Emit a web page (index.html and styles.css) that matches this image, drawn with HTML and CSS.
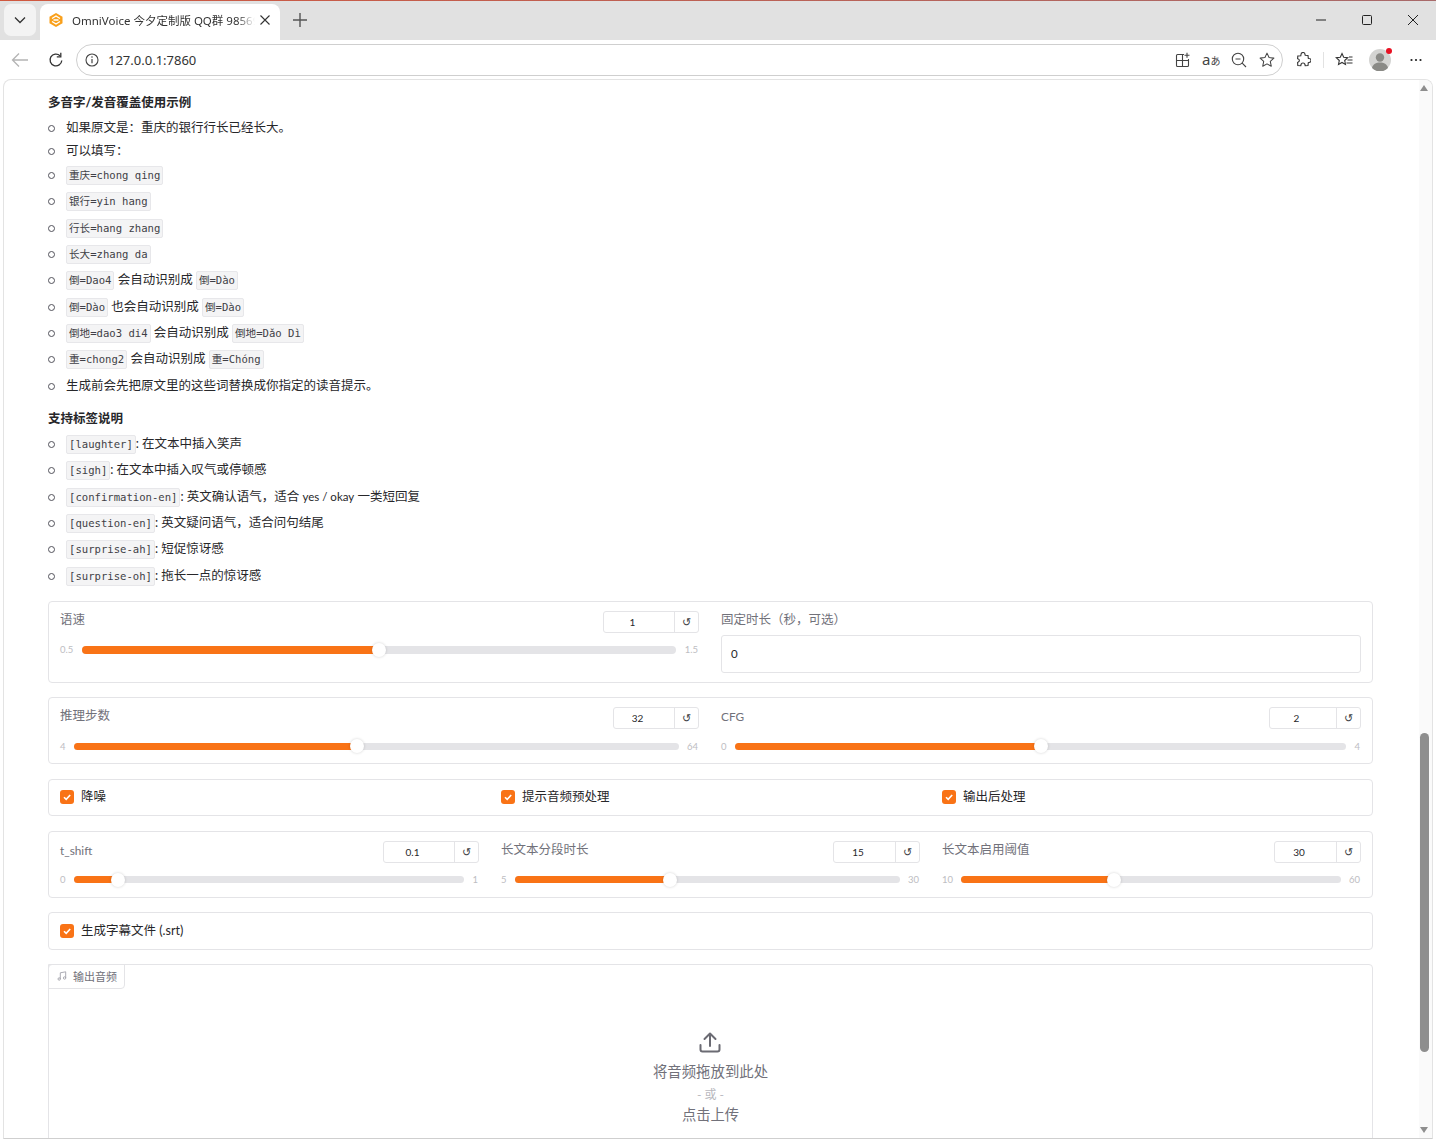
FILE: index.html
```html
<!DOCTYPE html>
<html lang="zh-CN">
<head>
<meta charset="utf-8">
<title>OmniVoice</title>
<link rel="stylesheet" href="styles.css">
</head>
<body>
<header class="tabstrip">
  <button class="tab-menu"><svg width="12" height="8" viewBox="0 0 12 8"><path d="M1 1.500l5 5 5-5" fill="none" stroke="#333" stroke-width="1.300"/></svg></button>
  <div class="tab">
    <svg class="favicon" width="16" height="16" viewBox="0 0 16 16"><path d="M8 1l6.500 3.700v6.600L8 15l-6.500-3.700V4.700z" fill="#f9a01b"/><path d="M4 6.500L8 4l4 2.500M4 9.500L8 12l4-2.500M5.500 8h5" stroke="#fff" stroke-width="1.400" fill="none"/></svg>
    <span class="tab-title">OmniVoice 今夕定制版 QQ群 985692</span>
    <svg width="10" height="10" viewBox="0 0 10 10"><path d="M.5.500l9 9M9.500.500l-9 9" stroke="#333" stroke-width="1.100"/></svg>
  </div>
  <svg class="newtab" width="14" height="14" viewBox="0 0 14 14"><path d="M7 0v14M0 7h14" stroke="#555" stroke-width="1.400"/></svg>
  <div class="winctl">
    <svg width="12" height="12" viewBox="0 0 12 12"><path d="M1 6h10" stroke="#222" stroke-width="1"/></svg>
    <svg width="12" height="12" viewBox="0 0 12 12"><rect x="1.500" y="1.500" width="9" height="9" rx="1" fill="none" stroke="#222"/></svg>
    <svg width="12" height="12" viewBox="0 0 12 12"><path d="M1 1l10 10M11 1L1 11" stroke="#222"/></svg>
  </div>
</header>

<nav class="toolbar">
  <svg class="nav-back" width="18" height="16" viewBox="0 0 18 16"><path d="M17 8H2M8 1.500L1.500 8 8 14.500" fill="none" stroke="#b4b4b4" stroke-width="1.300"/></svg>
  <svg class="nav-reload" width="16" height="16" viewBox="0 0 16 16"><path d="M13.800 8.500A5.900 5.900 0 1 1 12 3.700" fill="none" stroke="#333" stroke-width="1.300"/><path d="M12.800 .8v4h-4" fill="none" stroke="#333" stroke-width="1.300"/></svg>
  <div class="omnibox">
    <svg width="14" height="14" viewBox="0 0 14 14"><circle cx="7" cy="7" r="6" fill="none" stroke="#444" stroke-width="1.100"/><path d="M7 6v4.200" stroke="#444" stroke-width="1.200"/><circle cx="7" cy="4" r=".8" fill="#444"/></svg>
    <span class="url">127.0.0.1:7860</span>
    <div class="omni-icons">
      <svg width="16" height="16" viewBox="0 0 16 16"><path d="M9 2.500H2.500a1 1 0 0 0-1 1v10a1 1 0 0 0 1 1h10a1 1 0 0 0 1-1V7M1.500 8.500h12M7.500 2.500v12M12 .8v5M9.500 3.300h5" fill="none" stroke="#444" stroke-width="1.100"/></svg>
      <span class="translate">a<small>あ</small></span>
      <svg width="16" height="16" viewBox="0 0 16 16"><circle cx="7" cy="7" r="5.700" fill="none" stroke="#444" stroke-width="1.100"/><path d="M11.200 11.200L15 15M4.500 7h5" stroke="#444" stroke-width="1.100"/></svg>
      <svg width="16" height="16" viewBox="0 0 17 17"><path d="M8.500 1.200l2.200 4.700 5.100.6-3.800 3.500 1 5.100-4.500-2.500-4.500 2.500 1-5.100L1.200 6.500l5.100-.6z" fill="none" stroke="#444" stroke-width="1.100" stroke-linejoin="round"/></svg>
    </div>
  </div>
  <svg class="ext" width="16" height="16" viewBox="0 0 16 16"><path d="M6 2.500a2 2 0 0 1 4 0l.2.800 2.800.2.300 2.800.700.200a2 2 0 0 1 0 4l-.700.200-.300 2.800-2.800.2-.2-.700a2 2 0 0 0-4 0l-.2.700-3-.2-.200-3 .700-.400a1.600 1.600 0 0 0 0-3l-.700-.400.200-2.800 3-.2z" fill="none" stroke="#333" stroke-width="1.100"/></svg>
  <i class="tool-sep"></i>
  <svg class="favs" width="18" height="16" viewBox="0 0 18 16"><path d="M7 1.500l1.700 3.800 4 .4-3 2.800.8 4L7 10.500l-3.500 2 .8-4-3-2.800 4-.4zM12.500 8h5M11.500 11h6M14 5h3.500" fill="none" stroke="#333" stroke-width="1.100"/></svg>
  <div class="avatar"><svg width="22" height="22" viewBox="0 0 22 22"><circle cx="11" cy="11" r="11" fill="#d4d4d2"/><circle cx="11" cy="8.500" r="4.200" fill="#8a8a86"/><path d="M3 19c1-4 4-5.500 8-5.500s7 1.500 8 5.500a11 11 0 0 1-16 0z" fill="#8a8a86"/></svg><i class="avatar-dot"></i></div>
  <svg class="more" width="12" height="4" viewBox="0 0 12 4"><circle cx="1.500" cy="2" r="1.100" fill="#222"/><circle cx="6" cy="2" r="1.100" fill="#222"/><circle cx="10.500" cy="2" r="1.100" fill="#222"/></svg>
</nav>

<div class="viewport">
  <main class="page">
    <section class="prose">
      <p class="heading">多音字/发音覆盖使用示例</p>
      <ul>
        <li>如果原文是：重庆的银行行长已经长大。</li>
        <li>可以填写：</li>
        <li class="coderow"><code>重庆=chong qing</code></li>
        <li class="coderow"><code>银行=yin hang</code></li>
        <li class="coderow"><code>行长=hang zhang</code></li>
        <li class="coderow"><code>长大=zhang da</code></li>
        <li class="coderow"><code>倒=Dao4</code> 会自动识别成 <code>倒=Dào</code></li>
        <li class="coderow"><code>倒=Dào</code> 也会自动识别成 <code>倒=Dào</code></li>
        <li class="coderow"><code>倒地=dao3 di4</code> 会自动识别成 <code>倒地=Dǎo Dì</code></li>
        <li class="coderow"><code>重=chong2</code> 会自动识别成 <code>重=Chóng</code></li>
        <li>生成前会先把原文里的这些词替换成你指定的读音提示。</li>
      </ul>
      <p class="heading heading-second">支持标签说明</p>
      <ul>
        <li class="coderow"><code>[laughter]</code>: 在文本中插入笑声</li>
        <li class="coderow"><code>[sigh]</code>: 在文本中插入叹气或停顿感</li>
        <li class="coderow"><code>[confirmation-en]</code>: 英文确认语气，适合 <span class="latin">yes / okay</span> 一类短回复</li>
        <li class="coderow"><code>[question-en]</code>: 英文疑问语气，适合问句结尾</li>
        <li class="coderow"><code>[surprise-ah]</code>: 短促惊讶感</li>
        <li class="coderow"><code>[surprise-oh]</code>: 拖长一点的惊讶感</li>
      </ul>
    </section>

    <section class="panel cols-2 panel-tall">
      <div class="field">
        <div class="field-head"><label>语速</label><div class="num num-wide"><span class="num-val">1</span><span class="num-reset">↺</span></div></div>
        <div class="slider"><span class="lim">0.5</span><div class="track" style="--v:.5"><i class="fill"></i><i class="thumb"></i></div><span class="lim">1.5</span></div>
      </div>
      <div class="field">
        <label class="text-label">固定时长（秒，可选）</label>
        <div class="textbox">0</div>
      </div>
    </section>

    <section class="panel cols-2">
      <div class="field">
        <div class="field-head"><label>推理步数</label><div class="num"><span class="num-val">32</span><span class="num-reset">↺</span></div></div>
        <div class="slider"><span class="lim">4</span><div class="track thin" style="--v:.4667"><i class="fill"></i><i class="thumb"></i></div><span class="lim">64</span></div>
      </div>
      <div class="field">
        <div class="field-head"><label class="label-latin">CFG</label><div class="num num-mid"><span class="num-val">2</span><span class="num-reset">↺</span></div></div>
        <div class="slider"><span class="lim">0</span><div class="track thin" style="--v:.5"><i class="fill"></i><i class="thumb"></i></div><span class="lim">4</span></div>
      </div>
    </section>

    <section class="panel cols-3 panel-check">
      <div class="check"><i class="box"><svg width="10" height="10" viewBox="0 0 10 10"><path d="M2 5.200l2.200 2.200L8.200 3" fill="none" stroke="#fff" stroke-width="1.600"/></svg></i>降噪</div>
      <div class="check"><i class="box"><svg width="10" height="10" viewBox="0 0 10 10"><path d="M2 5.200l2.200 2.200L8.200 3" fill="none" stroke="#fff" stroke-width="1.600"/></svg></i>提示音频预处理</div>
      <div class="check"><i class="box"><svg width="10" height="10" viewBox="0 0 10 10"><path d="M2 5.200l2.200 2.200L8.200 3" fill="none" stroke="#fff" stroke-width="1.600"/></svg></i>输出后处理</div>
    </section>

    <section class="panel cols-3">
      <div class="field">
        <div class="field-head"><label class="label-latin">t_shift</label><div class="num num-wide"><span class="num-val">0.1</span><span class="num-reset">↺</span></div></div>
        <div class="slider"><span class="lim">0</span><div class="track thin" style="--v:.1"><i class="fill"></i><i class="thumb"></i></div><span class="lim">1</span></div>
      </div>
      <div class="field">
        <div class="field-head"><label>长文本分段时长</label><div class="num"><span class="num-val">15</span><span class="num-reset">↺</span></div></div>
        <div class="slider"><span class="lim">5</span><div class="track thin" style="--v:.4"><i class="fill"></i><i class="thumb"></i></div><span class="lim">30</span></div>
      </div>
      <div class="field">
        <div class="field-head"><label>长文本启用阈值</label><div class="num"><span class="num-val">30</span><span class="num-reset">↺</span></div></div>
        <div class="slider"><span class="lim">10</span><div class="track thin" style="--v:.4"><i class="fill"></i><i class="thumb"></i></div><span class="lim">60</span></div>
      </div>
    </section>

    <section class="panel panel-check panel-srt">
      <div class="check"><i class="box"><svg width="10" height="10" viewBox="0 0 10 10"><path d="M2 5.200l2.200 2.200L8.200 3" fill="none" stroke="#fff" stroke-width="1.600"/></svg></i>生成字幕文件 (.srt)</div>
    </section>

    <section class="audio">
      <div class="badge"><svg width="10" height="10" viewBox="0 0 10 10"><path d="M3.300 8V1.800l5.400-1V7" fill="none" stroke="#a1a1aa" stroke-width=".9"/><circle cx="2.200" cy="8" r="1.200" fill="none" stroke="#a1a1aa" stroke-width=".9"/><circle cx="7.600" cy="7" r="1.200" fill="none" stroke="#a1a1aa" stroke-width=".9"/></svg>输出音频</div>
      <div class="drop">
        <svg class="drop-icon" width="22" height="21" viewBox="0 0 22 21"><path d="M11 14V2M5.500 7L11 1.500 16.500 7M1.500 13v4.500a2 2 0 0 0 2 2h15a2 2 0 0 0 2-2V13" fill="none" stroke="#6b6b73" stroke-width="2" stroke-linecap="round" stroke-linejoin="round"/></svg>
        <p class="drop-main">将音频拖放到此处</p>
        <p class="drop-or">- 或 -</p>
        <p class="drop-click">点击上传</p>
      </div>
    </section>
  </main>
  <aside class="scrollbar">
    <i class="arrow-up"></i>
    <span class="sb-gap"></span>
    <i class="sb-thumb"></i>
    <span class="sb-rest"></span>
    <i class="arrow-down"></i>
  </aside>
</div>
</body>
</html>
```
FILE: styles.css
```css
* { box-sizing: border-box; }
html, body { margin: 0; height: 1142px; overflow: hidden; background: #fff; }
body {
  display: flex;
  flex-direction: column;
  font-family: "Lato", "Noto Sans CJK SC", sans-serif;
  font-size: 12.5px;
  color: #27272a;
}
p { margin: 0; }

.tabstrip {
  height: 40px;
  flex: none;
  display: flex;
  align-items: flex-start;
  background: #e1e1e1;
  border-top: 1px solid #c9604e;
  border-image: linear-gradient(90deg, #d0583f, #a86a6a) 1;
  padding-left: 4px;
  font-family: "Noto Sans", "Noto Sans CJK SC", sans-serif;
}
.tab-menu {
  width: 32px; height: 32px; margin-top: 3px;
  border: 0; border-radius: 7px; background: #f3f3f3; padding: 0;
  display: flex; align-items: center; justify-content: center;
}
.tab {
  width: 240px; height: 36px; margin: 3px 0 0 4px;
  background: #fff; border-radius: 8px 8px 0 0;
  display: flex; align-items: center;
  padding: 0 10px 4px 8px;
  font-size: 11.500px; color: #333;
}
.favicon { flex: none; }
.tab-title {
  flex: 1; margin: 0 5px 0 8px; white-space: nowrap; overflow: hidden;
  -webkit-mask-image: linear-gradient(90deg, #000 90%, transparent);
  mask-image: linear-gradient(90deg, #000 90%, transparent);
}
.newtab { margin: 12px 0 0 13px; }
.winctl { margin-left: auto; margin-top: 13px; display: flex; gap: 34px; padding-right: 17px; }

.toolbar {
  height: 39px; flex: none;
  display: flex; align-items: center;
  background: #fff;
  padding-left: 11px;
}
.nav-reload { margin-left: 19px; }
.omnibox {
  width: 1207px; height: 32px; margin-left: 12px;
  border: 1px solid #cfcfcf; border-radius: 16px;
  display: flex; align-items: center;
  padding: 0 7px 0 8px;
}
.url { margin-left: 9px; font-family: "Noto Sans", sans-serif; font-size: 13px; color: #333; }
.omni-icons { margin-left: auto; display: flex; align-items: center; gap: 12px; }
.translate { width: 16px; margin-left: -1px; margin-right: 1px; font-size: 15px; line-height: 16px; color: #444; font-family: "Noto Sans", "Noto Sans CJK JP", sans-serif; white-space: nowrap; }
.translate small { font-size: 10px; }
.ext { margin-left: 12px; }
.tool-sep { width: 1px; height: 16px; background: #e2e2e2; margin-left: 12px; }
.favs { margin-left: 11px; }
.avatar { position: relative; width: 22px; height: 22px; margin-left: 16px; }
.avatar svg { display: block; }
.avatar-dot { position: absolute; right: -1px; top: -1px; width: 6px; height: 6px; border-radius: 50%; background: #e81123; }
.more { margin-left: 19px; }

.viewport {
  flex: none;
  height: 1060px;
  margin: 0 3px;
  display: flex;
  background: #fff;
  border: 1px solid #e3e3e3;
  border-bottom-color: #cfcfcf;
  border-radius: 8px 8px 0 0;
  overflow: hidden;
}
.page {
  flex: 1;
  min-width: 0;
  padding: 14px 46px 0 44px;
  display: flex;
  flex-direction: column;
  gap: 14.400px;
}
.prose ul { margin: 0; padding: 0 0 0 18px; list-style: none; }
.prose li { position: relative; line-height: 18px; margin-bottom: 4.600px; }
.prose li::before {
  content: "";
  position: absolute; left: -18px; top: 6px;
  width: 5px; height: 5px;
  border: 1px solid #52525b; border-radius: 50%;
}
.prose li.coderow { line-height: 21.300px; margin-bottom: 5px; }
.prose li.coderow::before { top: 8px; }
.prose li.coderow + li:not(.coderow) { margin-top: 7.500px; }
.prose ul:last-child li:last-child { margin-bottom: .6px; }
.heading { font-weight: 700; line-height: 18px; margin-bottom: 7px; color: #27272a; }
.heading-second { margin-top: 15px; margin-bottom: 5px; }
.latin { font-size: 11.500px; }
code {
  display: inline-block;
  font-family: "DejaVu Sans Mono", "Noto Sans CJK SC", monospace;
  font-size: 10.600px;
  line-height: 15px;
  padding: 1px 2px;
  background: #f4f4f5;
  border: 1px solid #e7e7ea;
  border-radius: 2px;
  color: #3f3f46;
  vertical-align: baseline;
}

.panel {
  flex: none;
  border: 1px solid #e4e4e7;
  border-radius: 4px;
  padding: 9px 11px;
  display: grid;
  column-gap: 22px;
}
.cols-2 { grid-template-columns: 639px 1fr; }
.cols-3 { grid-template-columns: repeat(3, 1fr); }
.panel-check { height: 37.500px; padding: 0 11px; align-items: center; }
.panel-srt { height: 38px; }
.field { min-width: 0; padding-bottom: 1px; }
.panel-tall .field { padding-bottom: 0; }
.field-head { display: flex; justify-content: space-between; align-items: flex-start; height: 22px; }
label { color: #71717a; line-height: 18px; }
.label-latin { font-size: 11.800px; line-height: 19px; }
.num {
  height: 22px; display: flex;
  border: 1px solid #e4e4e7; border-radius: 3px;
  font-size: 10px;
}
.num-val { width: 60px; padding-right: 13px; text-align: center; line-height: 21px; color: #27272a; }
.cols-3 .num-val { width: 61px; }
.num-mid .num-val { width: 66px; }
.num-wide .num-val, .cols-3 .num-wide .num-val { width: 70px; }
.num-reset { width: 24px; border-left: 1px solid #e4e4e7; text-align: center; line-height: 21px; font-family: "DejaVu Sans", sans-serif; font-size: 11px; color: #3f3f46; }
.slider { display: flex; align-items: center; gap: 8px; height: 14px; margin-top: 10px; padding-right: 1px; }
.lim { font-size: 9.500px; color: #bdbdc2; flex: none; }
.track { position: relative; flex: 1; height: 8px; margin: 0 1px; border-radius: 4px; background: #e4e4e7; }
.track.thin { height: 7px; margin: 0; }
.fill {
  position: absolute; left: 0; top: 0; bottom: 0;
  width: calc(7px + var(--v) * (100% - 14px));
  background: #f97316; border-radius: 4px 0 0 4px;
}
.thumb {
  position: absolute; top: 50%;
  left: calc(7px + var(--v) * (100% - 14px));
  width: 14px; height: 14px; margin: -7px 0 0 -7px;
  background: #fff; border-radius: 50%;
  box-shadow: 0 0 3px rgba(0,0,0,.18);
}
.text-label { display: block; height: 24px; line-height: 17px; }
.textbox {
  height: 38px; border: 1px solid #e4e4e7; border-radius: 3px;
  padding: 0 9px; line-height: 36px; font-size: 11.500px; color: #27272a;
}
.check { display: flex; align-items: center; gap: 7px; color: #27272a; line-height: 16px; }
.box {
  width: 14px; height: 14px; flex: none; border-radius: 3px; background: #f97316;
  display: flex; align-items: center; justify-content: center;
}

.audio {
  flex: none; height: 260px;
  border: 1px solid #e4e4e7; border-radius: 4px 4px 0 0;
}
.badge {
  width: 77px; height: 25px; margin: -1px 0 0 -1px;
  border: 1px solid #e4e4e7; border-radius: 0 0 4px 0;
  display: flex; align-items: center; gap: 6px;
  padding: 0 0 2px 8px; font-size: 11px; color: #71717a;
}
.drop { display: flex; flex-direction: column; align-items: center; padding-top: 43px; }
.drop-icon { margin-left: -2px; }
.drop-main { margin-top: 9px; font-size: 14.400px; line-height: 20px; color: #71717a; }
.drop-or { margin-top: 3px; font-size: 12px; line-height: 20px; color: #b8b8be; }
.drop-click { font-size: 14.300px; line-height: 20px; color: #71717a; }

.scrollbar {
  flex: none; width: 13px; background: #fafafa;
  display: flex; flex-direction: column; align-items: center;
}
.arrow-up, .arrow-down { flex: none; width: 0; height: 0; border: 4px solid transparent; margin-left: -3px; }
.arrow-up { border-bottom: 6px solid #8e8e8e; border-top: 0; margin-top: 5px; }
.arrow-down { border-top: 6px solid #8e8e8e; border-bottom: 0; margin-bottom: 5px; }
.sb-gap { flex: none; height: 642px; }
.sb-thumb { flex: none; width: 9px; height: 319px; border-radius: 5px; background: #8e8e8e; margin-left: -3px; }
.sb-rest { flex: 1; }
```
